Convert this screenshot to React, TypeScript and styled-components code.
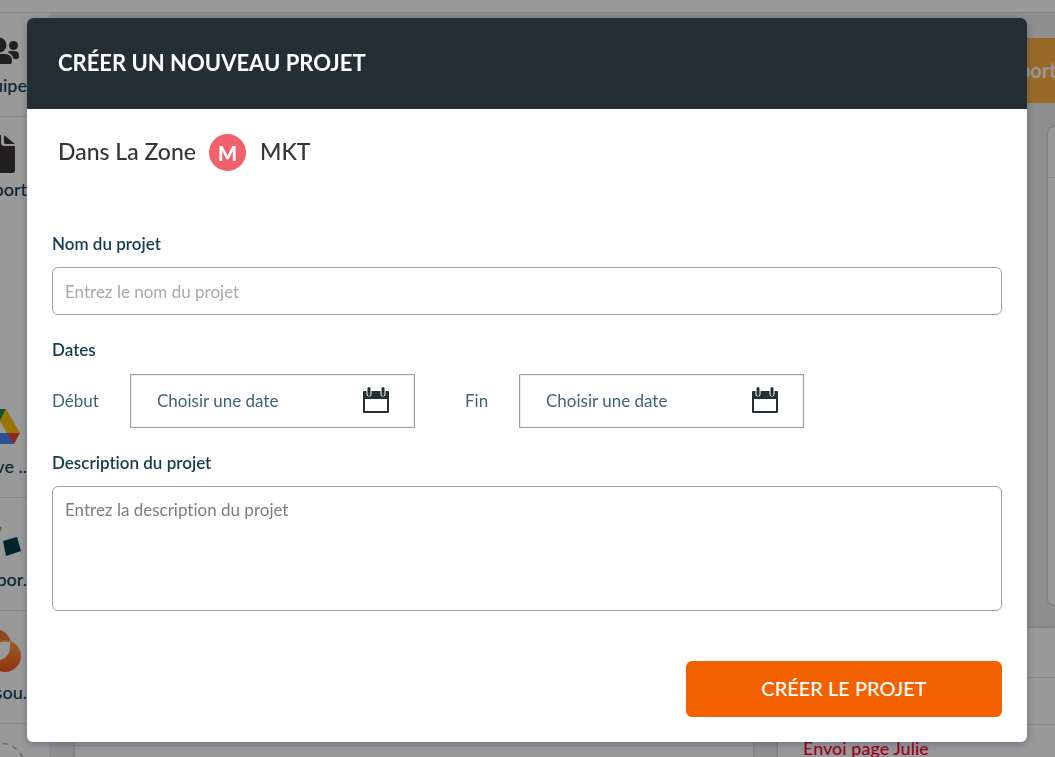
import React from "react";
import styled, { createGlobalStyle } from "styled-components";

const GlobalStyle = createGlobalStyle`
  * { box-sizing: border-box; }
  html, body, #root { height: 100%; }
  body {
    margin: 0;
    overflow: hidden;
    font-family: Lato, "Open Sans", sans-serif;
    font-variant-ligatures: none;
  }
  button, input, textarea { font-family: inherit; font-variant-ligatures: none; }
`;

const Page = styled.div`
  height: 100%;
  display: flex;
  flex-direction: column;
  background: #efefef;
`;
const TopBar = styled.header`
  flex: none;
  height: 13px;
  background: #fff;
  border-bottom: 1px solid #e2e2e2;
`;
const Workspace = styled.div`
  flex: 1;
  min-height: 0;
  display: flex;
`;
const Sidebar = styled.nav`
  flex: none;
  width: 49px;
  display: flex;
  flex-direction: column;
  justify-content: space-between;
  background: #fff;
  overflow: hidden;
`;
const SideGroup = styled.div`
  display: flex;
  flex-direction: column;
`;
const SideItem = styled.a<{ $tall?: boolean; $last?: boolean }>`
  height: ${(p) => (p.$tall ? 113 : 104)}px;
  display: flex;
  flex-direction: column;
  align-items: flex-end;
  justify-content: flex-end;
  gap: ${(p) => (p.$tall ? 7 : 5)}px;
  padding: 0 22px 20px 0;
  border-bottom: 1px solid ${(p) => (p.$last ? "transparent" : "#e4e4e4")};
  color: #103c55;
  font-size: 18px;
  line-height: 22px;
  font-weight: 500;
  text-decoration: none;
  white-space: nowrap;
  svg { flex: none; }
`;
const LastItem = styled.div`
  height: 33px;
  overflow: hidden;
`;

const Main = styled.main`
  flex: 1;
  min-width: 0;
  display: flex;
  flex-direction: column;
  overflow: hidden;
`;
const Actions = styled.div`
  flex: none;
  display: flex;
  justify-content: flex-end;
  margin-top: 25px;
`;
const ExportButton = styled.button`
  width: 80px;
  height: 65px;
  border: 0;
  padding: 0 0 2px 22px;
  background: #ffb142;
  color: #fff;
  font-size: 20px;
  font-weight: 700;
  white-space: nowrap;
  overflow: hidden;
  text-align: left;
`;
const SidePanel = styled.section`
  flex: none;
  align-self: flex-end;
  width: 7px;
  height: 478px;
  margin: 24px 0 23px;
  padding-top: 50px;
  background: #fff;
  border-radius: 8px 0 0 8px;
  box-shadow: 0 0 3px rgba(0, 0, 0, 0.3);
`;
const Rule = styled.hr`
  margin: 0;
  border: 0;
  border-top: 1px solid #e0e0e0;
`;
const Boards = styled.div`
  flex: none;
  display: grid;
  grid-template-columns: minmax(0, 678fr) minmax(0, 277fr);
  gap: 25px;
  padding-left: 26px;
`;
const Board = styled.section`
  background: #fff;
  box-shadow: 0 0 3px rgba(0, 0, 0, 0.3);
`;
const BoardRow = styled.div<{ $h: number }>`
  height: ${(p) => p.$h}px;
  padding: 12px 25px;
  border-bottom: 1px solid #e4e4e4;
  color: #ff0033;
  font-size: 18px;
  line-height: 22px;
  font-weight: 500;
`;

const Overlay = styled.div`
  position: fixed;
  inset: 0;
  display: flex;
  padding: 18px 28px 15px 27px;
  background: rgba(0, 0, 0, 0.4);
`;
const Modal = styled.section`
  flex: 1;
  min-width: 0;
  display: flex;
  flex-direction: column;
  background: #fff;
  border-radius: 6px;
  overflow: hidden;
  box-shadow: 0 2px 8px rgba(50, 60, 90, 0.4);
`;
const ModalHeader = styled.header`
  height: 91px;
  display: flex;
  align-items: center;
  padding: 0 31px 2px;
  background: #242f35;
`;
const Title = styled.h1`
  margin: 0;
  color: #fff;
  font-size: 22px;
  line-height: 28px;
  font-weight: 700;
`;
const Zone = styled.div`
  display: flex;
  align-items: center;
  padding: 25px 31px;
  color: #373435;
  font-size: 23px;
  line-height: 28px;
  font-weight: 500;
`;
const ZoneText = styled.span`
  padding-bottom: 4px;
`;
const Badge = styled.span`
  width: 37px;
  height: 37px;
  margin: 0 14px 0 13px;
  display: flex;
  align-items: center;
  justify-content: center;
  border-radius: 50%;
  background: #f0616b;
  color: #fff;
  font-size: 20px;
  font-weight: 900;
`;
const Form = styled.form`
  flex: 1;
  display: flex;
  flex-direction: column;
  padding: 37px 25px 25px;
  color: #143c50;
`;
const Label = styled.label`
  font-size: 17px;
  line-height: 22px;
  font-weight: 600;
`;
const NameInput = styled.input`
  width: 100%;
  height: 48px;
  margin: 12px 0 24px;
  padding: 0 12px;
  border: 1px solid #a0a0a0;
  border-radius: 6px;
  font-size: 17px;
  &::placeholder { color: #a9a9a9; opacity: 1; }
`;
const Fieldset = styled.fieldset`
  margin: 0;
  padding: 0;
  border: 0;
`;
const Legend = styled.legend`
  padding: 0;
  font-size: 17px;
  line-height: 22px;
  font-weight: 600;
`;
const DateRow = styled.div`
  display: flex;
  gap: 50px;
  margin: 13px 0 24px;
`;
const DateField = styled.div`
  display: flex;
  align-items: center;
  font-size: 17px;
  line-height: 22px;
  color: #3f6478;
`;
const DateLabel = styled.label<{ $w: number }>`
  width: ${(p) => p.$w}px;
`;
const DateButton = styled.button`
  width: 285px;
  height: 54px;
  display: flex;
  align-items: center;
  justify-content: space-between;
  padding: 0 25px 2px 26px;
  border: 1px solid #a0a0a0;
  background: #fff;
  box-shadow: inset 0 0 0 1px #eee;
  color: #3f6478;
  font-size: 17px;
`;
const Description = styled.textarea`
  width: 100%;
  height: 125px;
  margin: 12px 0 50px;
  padding: 12px;
  border: 1px solid #a0a0a0;
  border-radius: 6px;
  font-size: 17px;
  line-height: 22px;
  resize: none;
  &::placeholder { color: #7d7d7d; opacity: 1; }
`;
const Submit = styled.button`
  align-self: flex-end;
  width: 316px;
  height: 56px;
  padding: 0 0 2px;
  border: 0;
  border-radius: 6px;
  background: #f46200;
  color: #fff;
  font-size: 20px;
  font-weight: 500;
`;

const CalendarIcon = () => (
  <svg width="26" height="26" viewBox="0 0 26 26" aria-hidden="true">
    <path d="M1 5h24v20H1z" fill="#fff" stroke="#242f35" strokeWidth="2" strokeLinejoin="round" />
    <path d="M1 4h24v8H1z" fill="#242f35" />
    <path d="M6 2.500v4.500M20 2.500v4.500" stroke="#fff" strokeWidth="5" strokeLinecap="round" />
    <path d="M6 1.500v6M20 1.500v6" stroke="#242f35" strokeWidth="3" strokeLinecap="round" />
  </svg>
);
const TeamIcon = () => (
  <svg width="46" height="37" viewBox="-19 32 46 37" fill="#373435" aria-hidden="true">
    <circle cx="-1" cy="45" r="7.500" />
    <path d="M-12 64v-3q0-7 7-7H5q7 0 7 7v1q0 2-2 2z" />
    <circle cx="13.500" cy="45.500" r="4.500" />
    <path d="M9 51h5q5 0 5 5v1q0 2-2 2h-3.500q-1-5-5.500-6.500z" />
    <circle cx="-14" cy="45.500" r="4.500" />
  </svg>
);
const ReportIcon = () => (
  <svg width="46" height="42" viewBox="-19 131 46 42" fill="#373435" aria-hidden="true">
    <path d="M-15 139q0-4 4-4H1v8q0 3 3 3h11v24q0 3-3 3h-23q-4 0-4-4z" />
    <path d="M4 135l11 9H6q-2 0-2-2z" />
  </svg>
);
const DriveIcon = () => (
  <svg width="46" height="40" viewBox="-19 408 46 40" aria-hidden="true">
    <path d="M-7 409L0 421L-13 444L-20 433z" fill="#1ea362" />
    <path d="M-7 409h13L0 421z" fill="#1b8a4a" />
    <path d="M6 409L20 433H7L0 421z" fill="#ffc107" />
    <path d="M-13 433H8L14 444H-13z" fill="#4688f4" />
    <path d="M7 433h13l-6 11z" fill="#ea4335" />
  </svg>
);
const ShapesIcon = () => (
  <svg width="46" height="36" viewBox="-19 525 46 36" aria-hidden="true">
    <path d="M-12 525l14 2-6 15z" fill="#8cc400" />
    <path d="M3 541l14-4 4 14-15 5z" fill="#003c46" />
  </svg>
);
const OrbitIcon = () => (
  <svg width="46" height="44" viewBox="-19 631 46 44" aria-hidden="true">
    <defs>
      <linearGradient id="orb" x1="0" y1="0" x2="0" y2="1">
        <stop offset="0" stopColor="#ffa43c" />
        <stop offset="1" stopColor="#f4511e" />
      </linearGradient>
    </defs>
    <circle cx="-5" cy="646" r="16" fill="#f4742c" />
    <circle cx="5" cy="657" r="16" fill="url(#orb)" />
    <path d="M-11 646Q-5 642 10 643Q12 661-5 662z" fill="#fff" />
  </svg>
);
const DashedCircle = () => (
  <svg width="27" height="33" viewBox="0 724 27 33" aria-hidden="true">
    <circle cx="0" cy="768" r="25" fill="none" stroke="#b0b0b0" strokeWidth="1.500" strokeDasharray="5 5" />
  </svg>
);

export default function App() {
  return (
    <>
      <GlobalStyle />
      <Page>
        <TopBar />
        <Workspace>
          <Sidebar>
            <SideGroup>
              <SideItem href="#equipe"><TeamIcon />Équipe</SideItem>
              <SideItem $last href="#rapport"><ReportIcon />Rapport</SideItem>
            </SideGroup>
            <SideGroup>
              <SideItem $tall href="#drive"><DriveIcon />Drive ..</SideItem>
              <SideItem $tall href="#rappor"><ShapesIcon />Rappor.</SideItem>
              <SideItem $tall href="#ressources"><OrbitIcon />Ressou.</SideItem>
              <LastItem><DashedCircle /></LastItem>
            </SideGroup>
          </Sidebar>
          <Main>
            <Actions><ExportButton>Export</ExportButton></Actions>
            <SidePanel><Rule /></SidePanel>
            <Boards>
              <Board><BoardRow $h={118} /></Board>
              <Board>
                <BoardRow $h={50} />
                <BoardRow $h={47} />
                <BoardRow $h={47}>Envoi page Julie</BoardRow>
              </Board>
            </Boards>
          </Main>
        </Workspace>
      </Page>
      <Overlay>
        <Modal role="dialog" aria-modal="true" aria-labelledby="modal-title">
          <ModalHeader><Title id="modal-title">CRÉER UN NOUVEAU PROJET</Title></ModalHeader>
          <Zone><ZoneText>Dans La Zone</ZoneText><Badge>M</Badge><ZoneText>MKT</ZoneText></Zone>
          <Form onSubmit={(e) => e.preventDefault()}>
            <Label htmlFor="name">Nom du projet</Label>
            <NameInput id="name" placeholder="Entrez le nom du projet" />
            <Fieldset>
              <Legend>Dates</Legend>
              <DateRow>
                <DateField>
                  <DateLabel $w={78} htmlFor="start">Début</DateLabel>
                  <DateButton id="start" type="button">Choisir une date<CalendarIcon /></DateButton>
                </DateField>
                <DateField>
                  <DateLabel $w={54} htmlFor="end">Fin</DateLabel>
                  <DateButton id="end" type="button">Choisir une date<CalendarIcon /></DateButton>
                </DateField>
              </DateRow>
            </Fieldset>
            <Label htmlFor="description">Description du projet</Label>
            <Description id="description" placeholder="Entrez la description du projet" />
            <Submit type="submit">CRÉER LE PROJET</Submit>
          </Form>
        </Modal>
      </Overlay>
    </>
  );
}
